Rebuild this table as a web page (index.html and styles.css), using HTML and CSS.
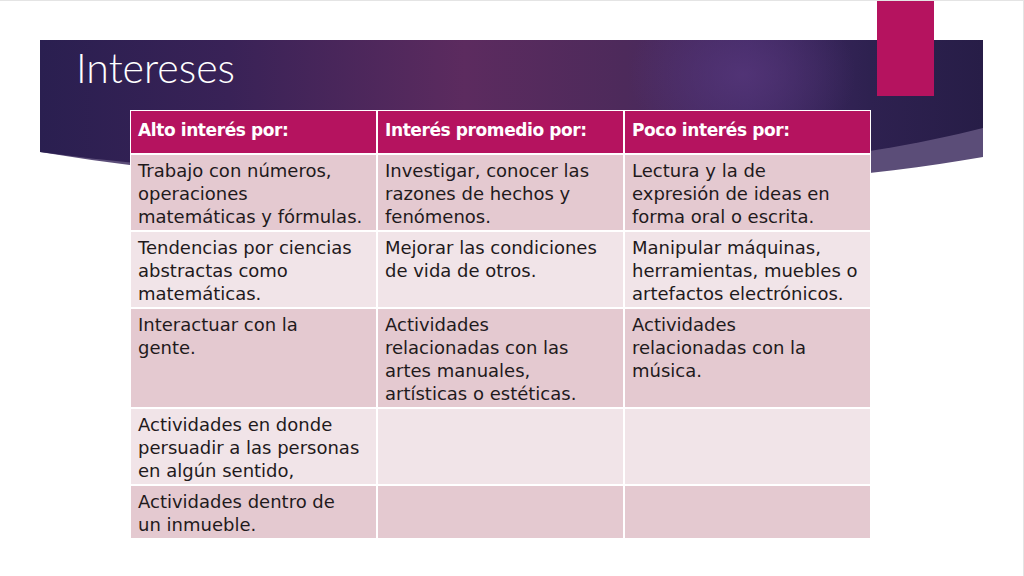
FILE: index.html
```html
<!DOCTYPE html>
<html lang="es">
<head>
<meta charset="utf-8">
<title>Intereses</title>
<link rel="stylesheet" href="styles.css">
</head>
<body>
<div class="slide">
  <svg class="banner" width="944" height="140" viewBox="0 0 944 140" aria-hidden="true">
    <defs>
      <linearGradient id="bg" x1="0" y1="0" x2="1" y2="0">
        <stop offset="0" stop-color="#2a1f50"/>
        <stop offset="0.2" stop-color="#392257"/>
        <stop offset="0.45" stop-color="#5c2b5f"/>
        <stop offset="0.62" stop-color="#4d2a5b"/>
        <stop offset="0.75" stop-color="#412964"/>
        <stop offset="0.88" stop-color="#2e2150"/>
        <stop offset="1" stop-color="#271d47"/>
      </linearGradient>
      <radialGradient id="glow" cx="0.745" cy="0.25" r="0.12" gradientTransform="translate(0.745 0.25) scale(1 5) translate(-0.745 -0.25)">
        <stop offset="0" stop-color="#55367a" stop-opacity="0.8"/>
        <stop offset="1" stop-color="#55367a" stop-opacity="0"/>
      </radialGradient>
    </defs>
    <path d="M0,0 H943 V117 C700,160 300,162 0,112 Z" fill="#5b4d78"/>
    <path d="M0,0 H943 V88 C700,150 300,152 0,112 Z" fill="url(#bg)"/>
    <path d="M0,0 H943 V88 C700,150 300,152 0,112 Z" fill="url(#glow)"/>
  </svg>
  <div class="accent"></div>

  <div class="content">
    <h1 class="title">Intereses</h1>
    <div class="table">
      <div class="cell head">Alto interés por:</div>
      <div class="cell head">Interés promedio por:</div>
      <div class="cell head">Poco interés por:</div>

      <div class="cell odd">Trabajo con números,<br>operaciones<br>matemáticas y fórmulas.</div>
      <div class="cell odd">Investigar, conocer las<br>razones de hechos y<br>fenómenos.</div>
      <div class="cell odd">Lectura y la de<br>expresión de ideas en<br>forma oral o escrita.</div>

      <div class="cell even">Tendencias por ciencias<br>abstractas como<br>matemáticas.</div>
      <div class="cell even">Mejorar las condiciones<br>de vida de otros.</div>
      <div class="cell even">Manipular máquinas,<br>herramientas, muebles o<br>artefactos electrónicos.</div>

      <div class="cell odd">Interactuar con la<br>gente.</div>
      <div class="cell odd">Actividades<br>relacionadas con las<br>artes manuales,<br>artísticas o estéticas.</div>
      <div class="cell odd">Actividades<br>relacionadas con la<br>música.</div>

      <div class="cell even">Actividades en donde<br>persuadir a las personas<br>en algún sentido,</div>
      <div class="cell even"></div>
      <div class="cell even"></div>

      <div class="cell odd">Actividades dentro de<br>un inmueble.</div>
      <div class="cell odd"></div>
      <div class="cell odd"></div>
    </div>
  </div>
</div>
</body>
</html>
```

FILE: styles.css
```css
* { box-sizing: border-box; }

html, body {
  margin: 0;
  padding: 0;
  background: #ffffff;
}

.slide {
  position: relative;
  width: 1024px;
  height: 576px;
  overflow: hidden;
  background: #ffffff;
  border-top: 1px solid #e4e4e4;
  border-right: 1px solid #e4e4e4;
}

.banner {
  position: absolute;
  left: 40px;
  top: 39px;
  display: block;
}

.accent {
  position: absolute;
  left: 877px;
  top: -1px;
  width: 57px;
  height: 96px;
  background: #b5135f;
}

.content {
  position: relative;
  display: flex;
  flex-direction: column;
  padding: 43px 0 0 76px;
}

.title {
  margin: 0;
  font-family: "Lato", "Liberation Sans", sans-serif;
  font-weight: 300;
  font-size: 41px;
  line-height: 48px;
  color: #ffffff;
}

.table {
  margin: 18px 0 0 54px;
  width: 741px;
  display: grid;
  grid-template-columns: 1fr 1fr 1fr;
  grid-auto-rows: auto;
  gap: 2px;
  background: #ffffff;
  border: 1px solid #ffffff;
}

.cell {
  font-family: "DejaVu Sans", "Liberation Sans", sans-serif;
  font-size: 18px;
  line-height: 23px;
  color: #1f1a1c;
  padding: 4px 6px 2px 7px;
  white-space: nowrap;
}

.head {
  height: 42px;
  padding: 8px 7px 0 7px;
  background: #b5135f;
  color: #ffffff;
  font-weight: bold;
  font-size: 17px;
  letter-spacing: -0.4px;
}

.odd { background: #e4c9d0; }
.even { background: #f1e4e8; }
```
